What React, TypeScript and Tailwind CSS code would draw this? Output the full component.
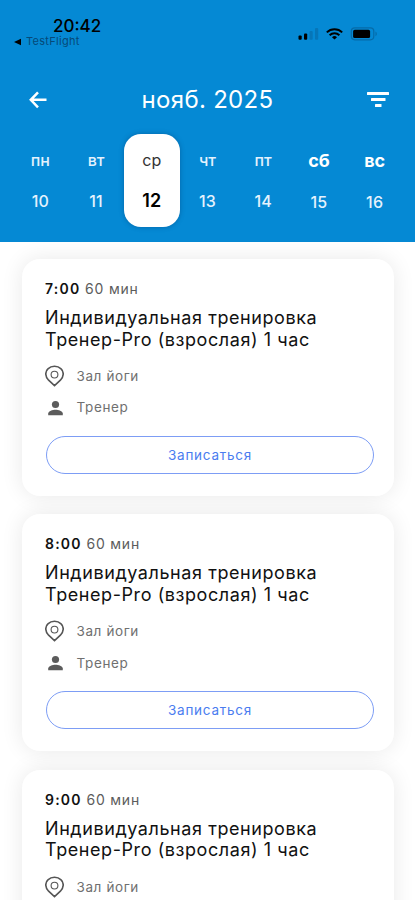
import React, { useState } from 'react'

const days = [
  { name: 'пн', date: 10 },
  { name: 'вт', date: 11 },
  { name: 'ср', date: 12 },
  { name: 'чт', date: 13 },
  { name: 'пт', date: 14 },
  { name: 'сб', date: 15, weekend: true },
  { name: 'вс', date: 16, weekend: true },
]

const sessions = ['7:00', '8:00', '9:00']

const StatusBar: React.FC = () => (
  <div className="flex h-[50px] justify-between pt-[17px] text-black">
    <div className="pl-[14px]">
      <div className="pl-[39px] text-[17px] leading-[19px] font-medium">20:42</div>
      <div className="flex items-center text-[11px] leading-[11px] text-[#064a78]">
        <svg width="8" height="8" viewBox="0 0 8 8" className="mr-[4px]">
          <path d="M7 .7v6.6L0 4z" fill="#000" />
        </svg>
        <span className="tracking-[0.3px]">TestFlight</span>
      </div>
    </div>
    <div className="flex h-[34px] items-center pr-[37px]">
      <svg width="21" height="14" viewBox="0 0 21 14">
        <rect x="0.5" y="8.5" width="3.2" height="4.2" rx="1" fill="#000" />
        <rect x="6" y="6.5" width="3.2" height="6.2" rx="1" fill="#000" />
        <rect x="11.5" y="4" width="3.2" height="8.7" rx="1" fill="#0676b8" />
        <rect x="17" y="1" width="3.2" height="11.7" rx="1" fill="#0676b8" />
      </svg>
      <svg width="17" height="12" viewBox="0 0 17 12" className="ml-[7px]" fill="none" stroke="#000" strokeWidth="1.9">
        <path d="M.8 4.4a11 11 0 0 1 15.4 0" />
        <path d="M3.6 7.2a7 7 0 0 1 9.8 0" />
        <path d="M8.5 11.6 6 9.3a3.6 3.6 0 0 1 5 0z" fill="#000" stroke="none" />
      </svg>
      <svg width="28" height="14" viewBox="0 0 28 14" className="ml-[7px]">
        <rect x="1.3" y="0.8" width="22.5" height="12" rx="3.5" fill="none" stroke="#066ba8" strokeWidth="1.2" />
        <rect x="3.1" y="2.8" width="17" height="8.2" rx="1.6" fill="#000" />
        <path d="M25.5 4.5c1.8.8 1.8 4 0 4.8z" fill="#066ba8" />
      </svg>
    </div>
  </div>
)

const SessionCard: React.FC<{ time: string }> = ({ time }) => (
  <article className="h-[237px] rounded-[18px] bg-white px-[23.5px] pt-5 shadow-[0_0_22px_rgba(0,0,0,0.09)]">
    <div className="text-[14px] leading-[20px] tracking-[0.8px] whitespace-nowrap text-[#5c5c5c]">
      <span className="font-semibold tracking-[1.2px] text-[#111]">{time}</span> 60 мин
    </div>
    <h2 className="mt-[8px] text-[18px] leading-[21.5px] tracking-[0.57px] whitespace-nowrap text-[#111]">
      Индивидуальная тренировка
      <br />
      Тренер-Pro (взрослая) 1 час
    </h2>
    <div className="mt-[15px] flex h-[22px] items-center text-[13.5px] tracking-[0.6px] text-[#707070]">
      <svg width="19" height="22" viewBox="0 0 19 22" fill="none" stroke="#555">
        <path d="M9.5 20.6 3.6 15.2C-.2 11.4.1 6.5 2.9 3.9c3.7-3.6 9.5-3.6 13.2 0 2.8 2.6 3.1 7.5-.7 11.3z" strokeWidth="1.6" />
        <circle cx="9.5" cy="9.6" r="3.4" strokeWidth="1.1" />
      </svg>
      <span className="ml-[12.5px]">Зал йоги</span>
    </div>
    <div className="mt-[9.5px] flex h-[22px] items-center text-[13.5px] tracking-[0.6px] text-[#707070]">
      <svg width="19" height="16" viewBox="0 0 19 16" fill="#5c5c5c">
        <circle cx="10.5" cy="4.5" r="3.6" />
        <path d="M3.2 15.2v-1.7c0-2.5 4.5-3.8 7.300-3.800s7.300 1.300 7.300 3.800v1.700z" />
      </svg>
      <span className="ml-[12.5px]">Тренер</span>
    </div>
    <button className="mt-[17.5px] ml-px block h-[38px] w-[328px] rounded-full border border-[#7d9df5] text-[13.5px] tracking-[0.75px] text-[#4a7df0]">
      Записаться
    </button>
  </article>
)

const App: React.FC = () => {
  const [selected, setSelected] = useState(12)

  return (
    <div className="flex h-[900px] w-[415px] flex-col overflow-hidden bg-white font-['Inter',sans-serif]">
      <header className="h-[242px] shrink-0 bg-[#0589d4]">
        <StatusBar />
        <div className="flex h-[84px] items-center justify-between pt-[16px] pr-[26px] pl-[29px] text-white">
          <button aria-label="Назад">
            <svg width="18" height="18" viewBox="0 0 18 18" fill="none" stroke="currentColor" strokeWidth="2.5">
              <path d="M17.5 8.8H2M9 1.3 1.8 8.8 9 16.3" />
            </svg>
          </button>
          <h1 className="pl-px text-[24px] leading-[30px] tracking-[0.3px]">нояб. 2025</h1>
          <button aria-label="Фильтр">
            <svg width="22" height="16" viewBox="0 0 22 16" fill="currentColor">
              <rect y="0" width="22" height="3" rx="0.5" />
              <rect x="4" y="6" width="14.5" height="3" rx="0.5" />
              <rect x="8" y="12" width="6.5" height="3" rx="0.5" />
            </svg>
          </button>
        </div>
        <div className="grid grid-cols-7 px-[12.5px]">
          {days.map((day) => {
            const active = day.date === selected
            return (
              <button
                key={day.date}
                onClick={() => setSelected(day.date)}
                className={`flex h-[93px] flex-col items-center rounded-[17px] pt-[15px] ${
                  active ? 'bg-white text-[#333] shadow-[0_0_5px_rgba(0,50,100,0.4)]' : 'text-[#e4f2fd]'
                }`}
              >
                <span className={`leading-[22px] ${day.weekend ? 'mt-px text-[18px] font-bold text-white' : active ? 'text-[16px]' : 'text-[16px] font-medium'}`}>
                  {day.name}
                </span>
                <span className={`mt-[19px] leading-[22px] ${active ? 'text-[18px] font-semibold text-black' : 'text-[16px] font-medium tracking-[0.2px]'}`}>
                  {day.date}
                </span>
              </button>
            )
          })}
        </div>
      </header>
      <main className="flex flex-col gap-[18.4px] px-[21.5px] pt-[17px]">
        {sessions.map((time) => (
          <SessionCard key={time} time={time} />
        ))}
      </main>
    </div>
  )
}

export default App
